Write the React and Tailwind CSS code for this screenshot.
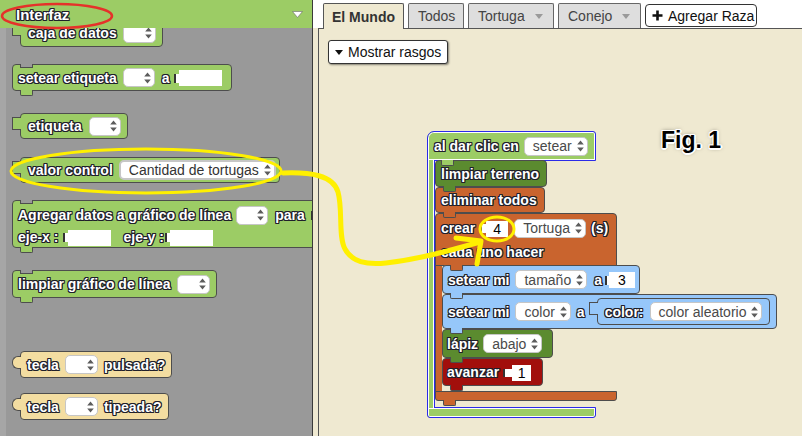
import React from "react";

const OUT =
  "[text-shadow:-1px_-1px_0_#1f1f2a,1px_-1px_0_#1f1f2a,-1px_1px_0_#1f1f2a,1px_1px_0_#1f1f2a,0_1px_0_#1f1f2a,0_-1px_0_#1f1f2a,1px_0_0_#1f1f2a,-1px_0_0_#1f1f2a]";

const G = "bg-[#9ccc65]";
const DG = "bg-[#5b8b2f]";
const OR = "bg-[#c9642e]";
const LB = "bg-[#96c7fa]";
const RD = "bg-[#a20f0c]";
const BE = "bg-[#f3dda1]";

function T({ children, className = "" }) {
  return (
    <span className={`text-white font-bold text-[14px] leading-none whitespace-nowrap ${OUT} ${className}`}>
      {children}
    </span>
  );
}

function Arrows() {
  return (
    <svg width="7" height="12" viewBox="0 0 7 12" className="shrink-0">
      <path d="M3.5 0.5L6.8 4.6H0.2Z M0.2 7.4H6.8L3.5 11.5Z" fill="#5c5c5c" />
    </svg>
  );
}

function Field({ children, className = "" }) {
  return (
    <span
      className={`inline-flex shrink-0 items-center justify-end gap-[5px] h-[19px] pl-[8px] pr-[3px] rounded-[5px] bg-white border border-[#c6c6c6] text-[14px] font-normal text-[#4a4a4a] leading-none whitespace-nowrap ${className}`}
    >
      {children}
      <Arrows />
    </span>
  );
}

function Slot({ children, notch = "w-[5px] h-[9px]", box = "w-[43px]" }) {
  return (
    <span className="inline-flex shrink-0 items-center">
      <span className={`${notch} bg-white border-l-2 border-[#333]`} />
      <span
        className={`${box} h-[16px] bg-white flex items-center justify-center text-[14px] font-normal text-black leading-none`}
      >
        {children}
      </span>
    </span>
  );
}

function Block({ bg, className = "", notch, tab, output, round, children }) {
  return (
    <div className={`relative shrink-0 flex items-center rounded-[4px] border border-[#4d4d4d] ${bg} ${className}`}>
      {notch && (
        <span className={`absolute -top-px left-[7px] w-[13px] h-[4px] border border-t-0 border-[#4d4d4d] ${notch}`} />
      )}
      {tab && (
        <span
          className={`absolute z-10 -bottom-[6px] left-[7px] w-[13px] h-[6px] border border-t-0 border-[#4d4d4d] rounded-b-[2px] ${bg}`}
        />
      )}
      {output && (
        <span
          className={`absolute -left-[9px] top-[3px] w-[9px] h-[13px] border border-r-0 border-[#4d4d4d] ${
            round ? "rounded-l-[6px] -left-[6px] w-[6px] top-[4px] h-[11px]" : ""
          } ${bg}`}
        />
      )}
      {children}
    </div>
  );
}

function Caret({ fill = "#9a9a9a" }) {
  return (
    <svg width="8" height="5" viewBox="0 0 8 5" className="shrink-0">
      <path d="M0 0H8L4 5Z" fill={fill} />
    </svg>
  );
}

function Palette() {
  return (
    <div className="w-[313px] h-full flex flex-col bg-[#999999] border-r border-[#3a3a3a] shrink-0">
      <div className="relative z-20 h-[28px] shrink-0 bg-[#9ccc65] flex items-center justify-between pl-[16px] pr-[9px]">
        <span className={`text-white font-bold text-[15px] leading-none ${OUT}`}>Interfaz</span>
        <svg width="11" height="7" viewBox="0 0 11 7">
          <path d="M0.5 0.5H10.5L5.5 6.5Z" fill="#fff" stroke="#6a6a6a" strokeWidth="0.6" />
        </svg>
      </div>
      <div className="flex-1 flex flex-col items-start border-l-[6px] border-[#a6a6a6] pl-[6px] overflow-hidden">
        <Block bg={G} output className="ml-[8px] -mt-[9px] w-[143px] h-[28px] pl-[7px] gap-[6px]">
          <T>caja de datos</T>
          <Field className="w-[33px]" />
        </Block>

        <Block bg={G} notch="bg-[#999999]" tab className="mt-[17px] w-[220px] h-[27px] pl-[5px]">
          <T>setear etiqueta</T>
          <Field className="w-[32px] ml-[6px]" />
          <T className="ml-[7px]">a</T>
          <span className="ml-[4px]">
            <Slot />
          </span>
        </Block>

        <Block bg={G} output className="ml-[8px] mt-[22px] w-[108px] h-[26px] pl-[7px] gap-[7px]">
          <T>etiqueta</T>
          <Field className="w-[32px]" />
        </Block>

        <Block bg={G} output className="ml-[8px] mt-[18px] w-[260px] h-[26px] pl-[7px] gap-[6px]">
          <T>valor control</T>
          <Field className="border-2 border-[#8db4ea] text-[#333] h-[20px]">Cantidad de tortugas</Field>
        </Block>

        <Block bg={G} notch="bg-[#999999]" tab className="mt-[17px] w-[330px] h-[48px] pl-[5px] pt-[2px] flex-col !items-start">
          <div className="h-[24px] flex items-center">
            <T>Agregar datos a gráfico de línea</T>
            <Field className="w-[32px] ml-[5px]" />
            <T className="ml-[7px]">para</T>
            <span className="ml-[6px]">
              <Slot />
            </span>
          </div>
          <div className="h-[20px] flex items-center">
            <T>eje-x :</T>
            <span className="ml-[5px]">
              <Slot />
            </span>
            <T className="ml-[12px]">eje-y :</T>
            <span className="ml-[1px]">
              <Slot />
            </span>
          </div>
        </Block>

        <Block bg={G} notch="bg-[#999999]" tab className="mt-[22px] w-[205px] h-[28px] pl-[5px] gap-[6px]">
          <T>limpiar gráfico de línea</T>
          <Field className="w-[33px]" />
        </Block>

        <Block bg={BE} output round className="ml-[8px] mt-[53px] w-[152px] h-[27px] pl-[6px]">
          <T>tecla</T>
          <Field className="w-[33px] ml-[6px]" />
          <T className="ml-[6px]">pulsada?</T>
        </Block>

        <Block bg={BE} output round className="ml-[8px] mt-[15px] w-[149px] h-[27px] pl-[6px]">
          <T>tecla</T>
          <Field className="w-[33px] ml-[6px]" />
          <T className="ml-[6px]">tipeada?</T>
        </Block>
      </div>
    </div>
  );
}

function Tabs() {
  return (
    <div className="relative z-10 h-[28px] shrink-0 bg-white flex items-end pl-[10px] text-[14px] leading-none">
      <div className="-mb-px h-[26px] w-[81px] flex items-center justify-center bg-[#efe9d1] border border-b-0 border-[#555] rounded-t-[2px] font-bold text-[#333]">
        El Mundo
      </div>
      <div className="ml-[4px] h-[25px] w-[56px] flex items-center pl-[9px] bg-[#dedede] border border-b-0 border-[#666] rounded-t-[2px] text-[#444]">
        Todos
      </div>
      <div className="ml-[4px] h-[25px] w-[86px] flex items-center pl-[9px] gap-[10px] bg-[#dedede] border border-b-0 border-[#666] rounded-t-[2px] text-[#444]">
        Tortuga
        <Caret />
      </div>
      <div className="ml-[4px] h-[25px] w-[83px] flex items-center pl-[9px] gap-[10px] bg-[#dedede] border border-b-0 border-[#666] rounded-t-[2px] text-[#444]">
        Conejo
        <Caret />
      </div>
      <button className="ml-[4px] mb-[1px] h-[23px] w-[112px] flex items-center pl-[6px] gap-[5px] bg-white border border-[#333] rounded-[4px] text-[#111]">
        <svg width="11" height="11" viewBox="0 0 11 11" className="shrink-0">
          <path d="M5.5 0.5V10.5M0.5 5.5H10.5" stroke="#111" strokeWidth="2.6" />
        </svg>
        Agregar Raza
      </button>
    </div>
  );
}

function Script() {
  return (
    <div className="absolute left-[108px] top-[102px] flex flex-col items-start">
      <div
        className={`relative w-[169px] h-[30px] flex items-center gap-[5px] pl-[6px] rounded-tl-[7px] rounded-tr-[3px] border border-[#2a2ae8] shadow-[inset_0_0_0_1px_#fff] ${G}`}
      >
        <T>al dar clic en</T>
        <Field>setear</Field>
        <span
          className={`absolute z-10 -bottom-[6px] left-[13px] w-[13px] h-[6px] border border-t-0 border-[#4d4d4d] rounded-b-[2px] ${G}`}
        />
      </div>
      <div className="flex -mt-px">
        <div
          className={`relative z-[2] w-[8px] border-x border-[#2a2ae8] shadow-[inset_1px_0_0_#fff,inset_-1px_0_0_#fff] ${G}`}
        />
        <div className="flex flex-col items-start pb-[7px]">
          <Block bg={DG} tab className="w-[112px] h-[27px] pl-[5px]">
            <T>limpiar terreno</T>
          </Block>
          <Block bg={OR} tab className="w-[110px] h-[26px] pl-[5px]">
            <T>eliminar todos</T>
          </Block>

          <div className="flex flex-col items-start">
            <div className={`relative w-[182px] h-[53px] pl-[5px] border border-[#4d4d4d] rounded-t-[4px] ${OR}`}>
              <div className="h-[28px] flex items-center">
                <T>crear</T>
                <span className="ml-[5px]">
                  <Slot notch="w-[6px] h-[9px]" box="w-[22px]">4</Slot>
                </span>
                <Field className="ml-[6px]">Tortuga</Field>
                <T className="ml-[5px]">(s)</T>
              </div>
              <div className="h-[20px] flex items-center">
                <T>cada uno hacer</T>
              </div>
              <span
                className={`absolute z-10 -bottom-[6px] left-[14px] w-[13px] h-[6px] border border-t-0 border-[#4d4d4d] rounded-b-[2px] ${OR}`}
              />
            </div>
            <div className="flex -mt-px">
              <div className={`w-[7px] border-l border-[#4d4d4d] ${OR}`} />
              <div className="flex flex-col items-start pb-[6px]">
                <Block bg={LB} tab className="w-[198px] h-[29px] pl-[5px]">
                  <T>setear mi</T>
                  <Field className="ml-[6px]">tamaño</Field>
                  <T className="ml-[7px]">a</T>
                  <span className="ml-[3px]">
                    <Slot notch="w-[4px] h-[9px]" box="w-[26px]">3</Slot>
                  </span>
                </Block>
                <Block bg={LB} tab className="w-[335px] h-[35px] pl-[5px]">
                  <T>setear mi</T>
                  <Field className="ml-[6px]">color</Field>
                  <T className="ml-[6px]">a</T>
                  <Block bg={LB} output className="ml-[12px] w-[173px] h-[27px] pl-[7px]">
                    <T>color:</T>
                    <Field className="ml-[6px]">color aleatorio</Field>
                  </Block>
                </Block>
                <Block bg={DG} tab className="w-[111px] h-[29px] pl-[4px]">
                  <T>lápiz</T>
                  <Field className="ml-[5px]">abajo</Field>
                </Block>
                <Block bg={RD} tab className="w-[101px] h-[28px] pl-[4px]">
                  <T>avanzar</T>
                  <span className="ml-[4px]">
                    <Slot notch="w-[9px] h-[8px]" box="w-[19px]">1</Slot>
                  </span>
                </Block>
              </div>
            </div>
            <div className={`relative -mt-px w-[182px] h-[10px] border border-[#4d4d4d] rounded-b-[3px] ${OR}`}>
              <span
                className={`absolute z-10 -bottom-[6px] left-[7px] w-[13px] h-[6px] border border-t-0 border-[#4d4d4d] rounded-b-[2px] ${OR}`}
              />
            </div>
          </div>
        </div>
      </div>
      <div
        className={`-mt-px w-[169px] h-[11px] rounded-b-[3px] border border-[#2a2ae8] shadow-[inset_0_0_0_1px_#fff] ${G}`}
      />
    </div>
  );
}

export default function App() {
  return (
    <div className="relative w-[802px] h-[436px] overflow-hidden flex bg-white font-['Liberation_Sans',Arial,sans-serif]">
      <Palette />
      <div className="flex-1 flex flex-col">
        <Tabs />
        <div className="flex-1 flex bg-[#efe9d1] pl-[5px]">
          <div className="flex-1 relative border-l border-t border-[#555]">
            <button className="mt-[11px] ml-[9px] h-[24px] w-[120px] flex items-center pl-[6px] gap-[5px] bg-white border border-[#333] rounded-[3px] shadow-[1px_1px_2px_rgba(0,0,0,0.45)] text-[14px] leading-none text-[#111]">
              <Caret fill="#111" />
              Mostrar rasgos
            </button>
            <span className="absolute left-[342px] top-[100px] text-[23px] font-bold leading-none text-black [text-shadow:1px_1px_0_#fff,-1px_-1px_0_#fff,1px_-1px_0_#fff,-1px_1px_0_#fff,0_2px_0_#fff,2px_0_0_#fff,0_0_4px_rgba(0,0,0,0.5)]">
              Fig. 1
            </span>
            <Script />
          </div>
        </div>
      </div>

      <svg className="absolute left-0 top-0 pointer-events-none z-40" width="802" height="436" viewBox="0 0 802 436">
        <ellipse cx="57" cy="16" rx="55" ry="12" fill="none" stroke="#e5322a" strokeWidth="2.5" />
        <ellipse cx="146" cy="171" rx="135" ry="22" fill="none" stroke="#fff000" strokeWidth="3" />
        <path
          d="M283 173 C310 172 333 175 338 192 C343 210 338 236 345 249 C352 262 366 265 386 263 C420 259 452 250 480 242"
          fill="none"
          stroke="#fff000"
          strokeWidth="5"
          strokeLinecap="round"
        />
        <path d="M456 238 L481 241 L477 264" fill="none" stroke="#fff000" strokeWidth="5" strokeLinecap="round" strokeLinejoin="round" />
        <ellipse cx="497" cy="229" rx="17" ry="12" fill="none" stroke="#fff000" strokeWidth="3" />
      </svg>
    </div>
  );
}
